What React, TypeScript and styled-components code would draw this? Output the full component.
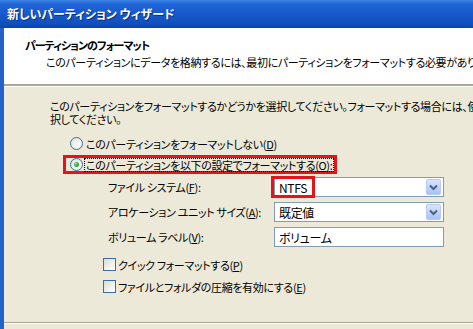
import styled, { createGlobalStyle } from "styled-components";

const GlobalStyle = createGlobalStyle`
  html, body {
    margin: 0;
    padding: 0;
    background: #ece9d8;
  }
  * {
    box-sizing: border-box;
  }
`;

const Window = styled.div`
  width: 473px;
  height: 329px;
  overflow: hidden;
  display: flex;
  flex-direction: column;
  background: #ece9d8;
  font-family: "Noto Sans CJK JP", "Liberation Sans", sans-serif;
  font-size: 11px;
  letter-spacing: -0.35px;
  font-feature-settings: "palt";
  color: #000;
`;

const TitleBar = styled.div`
  height: 28px;
  flex: none;
  display: flex;
  align-items: center;
  padding: 0 0 1px 7px;
  background: linear-gradient(
    to bottom,
    #3d86e6 0%,
    #1f64d6 15%,
    #1657c9 55%,
    #1050bd 85%,
    #0b45a8 100%
  );
  color: #fff;
  font-weight: bold;
  font-size: 12px;
  letter-spacing: 0;
  text-shadow: 1px 1px 0 #0a2f7a;
  white-space: nowrap;
`;

const Frame = styled.div`
  flex: 1;
  display: flex;
  flex-direction: column;
  border-left: 4px solid #2461c9;
`;

const Header = styled.div`
  height: 59px;
  flex: none;
  background: #fff;
  padding: 10px 0 0 21px;
  border-bottom: 1px solid #fff;
  box-shadow: inset 0 -2px 0 #aca899;
  white-space: nowrap;
`;

const HeaderTitle = styled.div`
  font-weight: bold;
  line-height: 14px;
  letter-spacing: -1px;
`;

const HeaderText = styled.div`
  margin: 3px 0 0 21px;
  line-height: 14px;
`;

const Body = styled.div`
  flex: 1;
  padding: 13px 0 0 46px;
  border-bottom: 1px solid #aca899;
  overflow: hidden;
`;

const Description = styled.div`
  margin: 0 0 8px;
`;

const DescLine = styled.div`
  height: 13px;
  line-height: 13px;
  white-space: nowrap;
`;

const Options = styled.div`
  display: flex;
  flex-direction: column;
  gap: 2px;
  margin-left: 13px;
`;

const RadioRow = styled.label<{ $marked?: boolean }>`
  display: flex;
  align-items: center;
  gap: 2px;
  width: fit-content;
  height: 19px;
  padding: 0 1px 0 4px;
  border: 3px solid ${({ $marked }) => ($marked ? "#e5141b" : "transparent")};
  white-space: nowrap;
`;

const Radio = styled.span<{ $checked?: boolean }>`
  width: 13px;
  height: 13px;
  flex: none;
  border-radius: 50%;
  border: 1px solid #3a6ea5;
  background: radial-gradient(circle at 65% 65%, #fff 0%, #e6e6e0 70%, #d8d8d0 100%);
  display: flex;
  align-items: center;
  justify-content: center;

  &::after {
    content: "";
    display: ${({ $checked }) => ($checked ? "block" : "none")};
    width: 5px;
    height: 5px;
    border-radius: 50%;
    background: radial-gradient(circle at 35% 35%, #8be08b 0%, #2aa52a 60%, #1c8a1c 100%);
  }
`;

const RadioText = styled.span<{ $focused?: boolean }>`
  line-height: 12px;
  padding: 0 1px;
  outline: ${({ $focused }) => ($focused ? "1px dotted #000" : "none")};
  outline-offset: 0;
`;

const Key = styled.span`
  text-decoration: underline;
`;

const FormGrid = styled.div`
  display: grid;
  grid-template-columns: 166px 170px;
  grid-auto-rows: 20px;
  row-gap: 5px;
  align-items: center;
  margin: 3px 0 0 58px;
`;

const FieldLabel = styled.span`
  white-space: nowrap;
`;

const Field = styled.div`
  position: relative;
  height: 20px;
  display: flex;
  align-items: center;
  padding: 0 2px 0 4px;
  background: #fff;
  border: 1px solid #7f9db9;
`;

const FieldValue = styled.span`
  flex: 1;
  white-space: nowrap;
  font-size: 12px;
`;

const DropButton = styled.span`
  width: 15px;
  height: 16px;
  flex: none;
  display: flex;
  align-items: center;
  justify-content: center;
  border-radius: 2px;
  border: 1px solid #b9cbf3;
  background: linear-gradient(to bottom, #d9e5fd 0%, #bdd0f8 60%, #a9c1f4 100%);
`;

const Marker = styled.span`
  position: absolute;
  left: -4px;
  top: -2px;
  width: 44px;
  height: 22px;
  border: 3px solid #e5141b;
`;

const Checks = styled.div`
  display: flex;
  flex-direction: column;
  gap: 9px;
  margin: 11px 0 0 53px;
`;

const CheckRow = styled.label`
  display: flex;
  align-items: center;
  gap: 2px;
  height: 13px;
  white-space: nowrap;
`;

const CheckBox = styled.span`
  width: 13px;
  height: 13px;
  flex: none;
  border: 1px solid #3a6ea5;
  background: linear-gradient(135deg, #dcdcd5 0%, #f2f2ee 60%, #ffffff 100%);
`;

const Footer = styled.div`
  height: 6px;
  flex: none;
  border-top: 1px solid #fff;
  background: #ece9d8;
`;

const Chevron = () => (
  <svg width="9" height="7" viewBox="0 0 9 7">
    <path d="M1 1.5 L4.5 5 L8 1.5" fill="none" stroke="#4d6185" strokeWidth="2" />
  </svg>
);

export default function App() {
  return (
    <>
      <GlobalStyle />
      <Window>
        <TitleBar>新しいパーティション ウィザード</TitleBar>
        <Frame>
          <Header>
            <HeaderTitle>パーティションのフォーマット</HeaderTitle>
            <HeaderText>
              このパーティションにデータを格納するには、最初にパーティションをフォーマットする必要があります。
            </HeaderText>
          </Header>
          <Body>
            <Description>
              <DescLine>
                このパーティションをフォーマットするかどうかを選択してください。フォーマットする場合には、使用する設定を選
              </DescLine>
              <DescLine>択してください。</DescLine>
            </Description>
            <Options>
              <RadioRow>
                <Radio />
                <RadioText>
                  このパーティションをフォーマットしない(<Key>D</Key>)
                </RadioText>
              </RadioRow>
              <RadioRow $marked>
                <Radio $checked />
                <RadioText $focused>
                  このパーティションを以下の設定でフォーマットする(<Key>O</Key>):
                </RadioText>
              </RadioRow>
            </Options>
            <FormGrid>
              <FieldLabel>
                ファイル システム(<Key>F</Key>):
              </FieldLabel>
              <Field>
                <Marker />
                <FieldValue>NTFS</FieldValue>
                <DropButton>
                  <Chevron />
                </DropButton>
              </Field>
              <FieldLabel>
                アロケーション ユニット サイズ(<Key>A</Key>):
              </FieldLabel>
              <Field>
                <FieldValue>既定値</FieldValue>
                <DropButton>
                  <Chevron />
                </DropButton>
              </Field>
              <FieldLabel>
                ボリューム ラベル(<Key>V</Key>):
              </FieldLabel>
              <Field>
                <FieldValue>ボリューム</FieldValue>
              </Field>
            </FormGrid>
            <Checks>
              <CheckRow>
                <CheckBox />
                <span>
                  クイック フォーマットする(<Key>P</Key>)
                </span>
              </CheckRow>
              <CheckRow>
                <CheckBox />
                <span>
                  ファイルとフォルダの圧縮を有効にする(<Key>E</Key>)
                </span>
              </CheckRow>
            </Checks>
          </Body>
          <Footer />
        </Frame>
      </Window>
    </>
  );
}
